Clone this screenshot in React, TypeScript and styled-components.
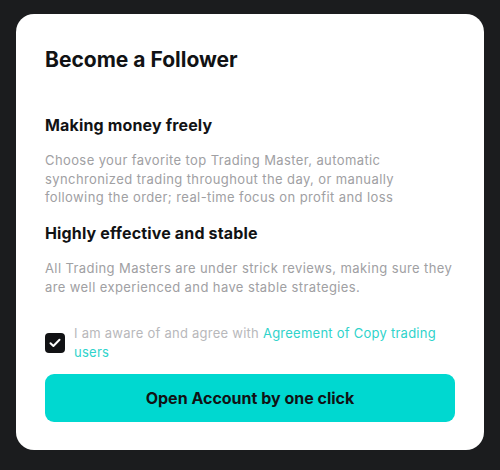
import styled, { createGlobalStyle } from 'styled-components'

const GlobalStyle = createGlobalStyle`
	* {
		box-sizing: border-box;
	}
	html,
	body {
		margin: 0;
		padding: 0;
		background-color: #1b1c1e;
	}
	body {
		font-family: Inter, 'Noto Sans', sans-serif;
		color: #111214;
	}
`

export default function App() {
	return (
		<>
			<GlobalStyle />
			<Page>
				<Modal>
					<Title>Become a Follower</Title>
					<Section $first>
						<Heading>Making money freely</Heading>
						<Text>
							Choose your favorite top Trading Master, automatic synchronized
							trading throughout the day, or manually following the order;
							real-time focus on profit and loss
						</Text>
					</Section>
					<Section>
						<Heading>Highly effective and stable</Heading>
						<Text>
							All Trading Masters are under strick reviews, making sure they
							are well experienced and have stable strategies.
						</Text>
					</Section>
					<Agreement>
						<CheckBox>
							<svg width='12' height='10' viewBox='0 0 12 10' fill='none'>
								<path
									d='M1.5 5.2L4.4 8L10.5 1.8'
									stroke='#fff'
									strokeWidth='2'
									strokeLinecap='round'
									strokeLinejoin='round'
								/>
							</svg>
						</CheckBox>
						<AgreeText>
							I am aware of and agree with{' '}
							<AgreeLink>Agreement of Copy trading users</AgreeLink>
						</AgreeText>
					</Agreement>
					<Button>Open Account by one click</Button>
				</Modal>
			</Page>
		</>
	)
}

const Page = styled.div`
	width: 500px;
	height: 470px;
	padding: 14px 16px 0;
`

const Modal = styled.div`
	width: 468px;
	height: 436px;
	background-color: #ffffff;
	border-radius: 18px;
	padding: 32px 29px 28px;
	display: flex;
	flex-direction: column;
`

const Title = styled.h2`
	margin: 0;
	font-size: 21px;
	line-height: 28px;
	font-weight: 700;
`

const Section = styled.div<{ $first?: boolean }>`
	margin-top: ${({ $first }) => ($first ? '39px' : '14px')};
	display: flex;
	flex-direction: column;
	gap: 14px;
`

const Heading = styled.h3`
	margin: 0;
	font-size: 16px;
	line-height: 24px;
	font-weight: 700;
	letter-spacing: 0.15px;
`

const Text = styled.p`
	margin: 0;
	font-size: 13px;
	line-height: 18.7px;
	letter-spacing: 0.4px;
	color: #a0a0a3;
`

const Agreement = styled.div`
	margin-top: 27px;
	display: flex;
	align-items: center;
	gap: 9px;
`

const CheckBox = styled.span`
	flex: none;
	width: 20px;
	height: 20px;
	border-radius: 4px;
	background-color: #111214;
	display: flex;
	align-items: center;
	justify-content: center;
`

const AgreeText = styled.span`
	font-size: 13px;
	line-height: 19px;
	letter-spacing: 0.25px;
	color: #b8b8bb;
`

const AgreeLink = styled.a`
	color: #2fd3cb;
	cursor: pointer;
`

const Button = styled.button`
	margin-top: 12px;
	width: 100%;
	height: 48px;
	border: none;
	border-radius: 9px;
	background-color: #00d8d0;
	font-family: inherit;
	font-size: 16px;
	font-weight: 700;
	color: #111214;
	cursor: pointer;
`
